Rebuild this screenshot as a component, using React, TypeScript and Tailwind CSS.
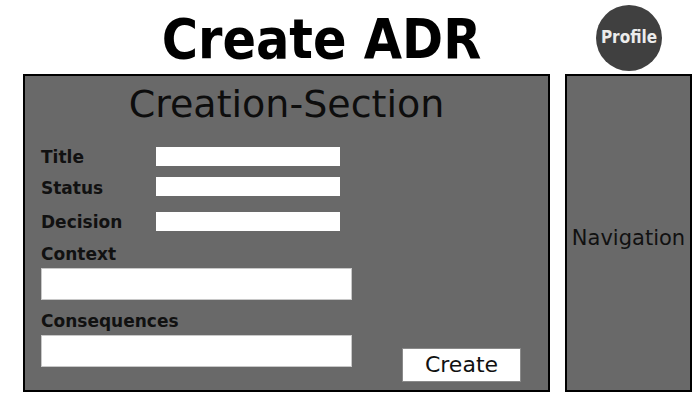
export default function App() {
  return (
    <div className="w-[700px] h-[400px] bg-white font-['DejaVu_Sans',sans-serif] text-[#111]">
      {/* Header */}
      <div className="flex h-[74px] items-center">
        <h1 className="w-[643px] pt-[4px] text-center font-['DejaVu_Sans_Condensed','DejaVu_Sans',sans-serif] text-[55px] font-bold leading-[62px] text-black">
          Create ADR
        </h1>
        <div className="flex h-[66px] w-[66px] -ml-[47px] mt-[1px] items-center justify-center rounded-full bg-[#404040]">
          <span className="font-['DejaVu_Sans_Condensed','DejaVu_Sans',sans-serif] text-[17px] font-semibold text-[#ececec]">
            Profile
          </span>
        </div>
      </div>

      {/* Body */}
      <div className="ml-[23px] flex gap-[15px]">
        <section className="flex h-[318px] w-[527px] flex-col border-2 border-black bg-[#696969] px-[16px] pt-[6px]">
          <h2 className="text-center text-[38px] leading-[44px] text-[#0d0d0d]">Creation-Section</h2>

          <div className="mt-[21px] flex h-[19px] items-center">
            <label className="w-[115px] pt-[1px] text-[17px] font-bold leading-[19px]">Title</label>
            <div className="h-[19px] w-[184px] bg-white" />
          </div>
          <div className="mt-[11px] flex h-[19px] items-center">
            <label className="w-[115px] pt-[3px] text-[17px] font-bold leading-[19px]">Status</label>
            <div className="h-[19px] w-[184px] bg-white" />
          </div>
          <div className="mt-[16px] flex h-[19px] items-center">
            <label className="w-[115px] pt-[1px] text-[17px] font-bold leading-[19px]">Decision</label>
            <div className="h-[19px] w-[184px] bg-white" />
          </div>

          <label className="mt-[14px] text-[17px] font-bold leading-[19px]">Context</label>
          <div className="mt-[4px] h-[32px] w-[311px] border border-[#c8c8c8] bg-white" />

          <label className="mt-[12px] text-[17px] font-bold leading-[19px]">Consequences</label>
          <div className="mt-[4px] flex items-start">
            <div className="h-[32px] w-[311px] border border-[#c8c8c8] bg-white" />
            <button className="ml-[50px] mt-[13px] h-[34px] w-[119px] border border-[#8a8a8a] bg-white text-[22px] leading-[30px] text-[#111]">
              Create
            </button>
          </div>
        </section>

        <nav className="flex h-[318px] w-[127px] items-center justify-center border-2 border-black bg-[#696969] pt-[12px]">
          <span className="text-[21px] text-[#111]">Navigation</span>
        </nav>
      </div>
    </div>
  );
}
